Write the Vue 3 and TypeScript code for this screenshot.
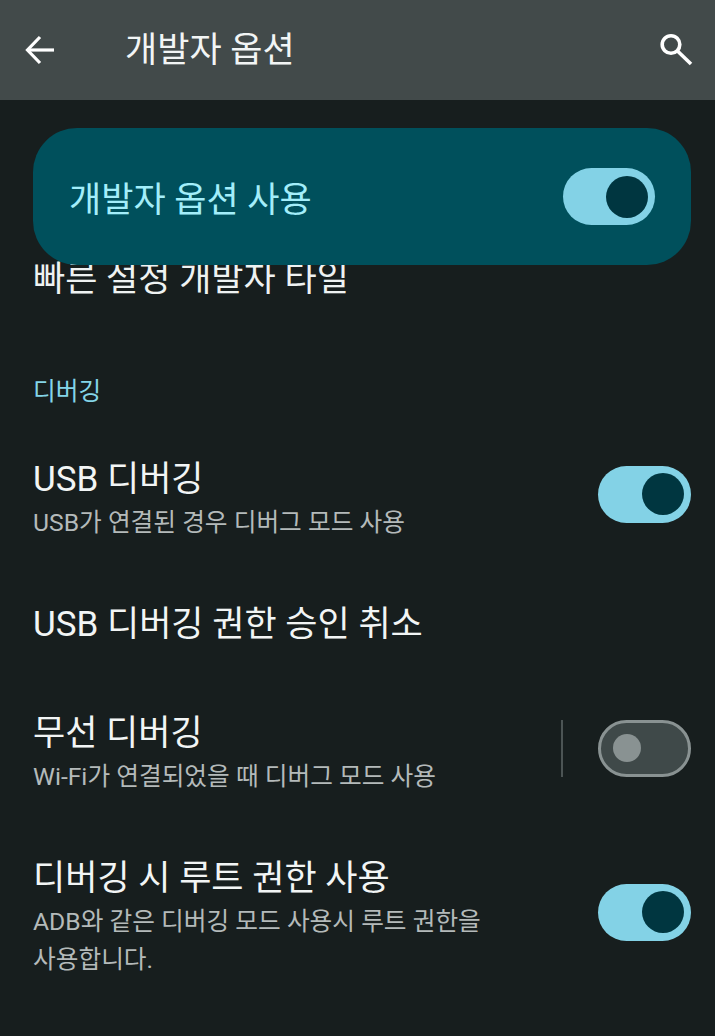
<script setup lang="ts">
interface SettingRow {
  title: string;
  summary?: string;
  toggle?: boolean;
  divider?: boolean;
}

const rows: SettingRow[] = [
  { title: "USB 디버깅", summary: "USB가 연결된 경우 디버그 모드 사용", toggle: true },
  { title: "USB 디버깅 권한 승인 취소" },
  { title: "무선 디버깅", summary: "Wi-Fi가 연결되었을 때 디버그 모드 사용", toggle: false, divider: true },
  { title: "디버깅 시 루트 권한 사용", summary: "ADB와 같은 디버깅 모드 사용시 루트 권한을 사용합니다.", toggle: true },
];
</script>

<template>
  <div class="screen">
    <header class="toolbar">
      <svg class="back" width="32" height="32" viewBox="0 0 32 32" fill="none" stroke="#fff" stroke-width="3.2">
        <path d="M30 16H4" />
        <path d="M16 3L3.500 16 16 29" />
      </svg>
      <h1 class="toolbar-title">개발자 옵션</h1>
      <svg class="search" width="34" height="34" viewBox="0 0 34 34" fill="none" stroke="#fff" stroke-width="3.6">
        <circle cx="12" cy="12.500" r="8.800" />
        <path d="M18.500 19L32 32" />
      </svg>
    </header>

    <main class="content">
      <!-- 스크롤 시 목록 위에 겹쳐 있는 마스터 스위치 -->
      <div class="master">
        <span class="master-label">개발자 옵션 사용</span>
        <span class="switch on"><span class="knob"></span></span>
      </div>

      <div class="peek">빠른 설정 개발자 타일</div>

      <div class="section-title">디버깅</div>

      <div v-for="row in rows" :key="row.title" class="row">
        <div class="row-text">
          <div class="row-title">{{ row.title }}</div>
          <div v-if="row.summary" class="row-summary">{{ row.summary }}</div>
        </div>
        <span v-if="row.divider" class="divider"></span>
        <span v-if="row.toggle !== undefined" class="switch" :class="row.toggle ? 'on' : 'off'">
          <span class="knob"></span>
        </span>
      </div>
    </main>
  </div>
</template>

<style>
html,
body {
  margin: 0;
  background: #171e1e;
}
</style>

<style scoped>
.screen {
  width: 715px;
  height: 1036px;
  overflow: hidden;
  background: #171e1e;
  font-family: Roboto, "Noto Sans CJK KR", sans-serif;
}

.toolbar {
  height: 100px;
  box-sizing: border-box;
  display: flex;
  align-items: center;
  padding: 0 22px 0 24px;
  background: #424a4a;
}

.back {
  flex: none;
}

.toolbar-title {
  flex: 1;
  margin: 0 0 7px 69px;
  font-size: 35px;
  font-weight: 400;
  color: #f2f5f5;
}

.search {
  flex: none;
  margin-bottom: 2px;
}

.content {
  position: relative;
  padding: 0 24px 0 33px;
}

.master {
  position: absolute;
  z-index: 2;
  top: 28px;
  left: 33px;
  right: 24px;
  height: 137px;
  box-sizing: border-box;
  display: flex;
  align-items: center;
  justify-content: space-between;
  padding: 0 36px;
  border-radius: 44px;
  background: #00505c;
}

.master .switch {
  width: 92px;
}

.master-label {
  font-size: 35px;
  color: #a3eefa;
}

.peek {
  padding-top: 157px;
  height: 46px;
  font-size: 35px;
  line-height: 46px;
  color: #eef2f2;
}

.section-title {
  margin: 73px 0 13px;
  height: 32px;
  font-size: 24.7px;
  line-height: 32px;
  color: #84d5e8;
}

.row {
  display: flex;
  align-items: center;
  padding: 27px 0 26px;
}

.row-text {
  flex: 1;
  min-height: 50px;
  max-width: 460px;
  padding-top: 8px;
  margin-bottom: -2px;
  word-break: keep-all;
}

.row-title {
  font-size: 35px;
  line-height: 48px;
  white-space: nowrap;
  color: #f2f5f5;
}

.row-summary {
  font-size: 24.7px;
  line-height: 38px;
  color: #b4baba;
}

.divider {
  width: 2px;
  height: 57px;
  margin: 0 35px 0 auto;
  background: #4c5454;
}

.switch {
  flex: none;
  width: 93px;
  height: 57px;
  margin-left: auto;
  box-sizing: border-box;
  display: flex;
  align-items: center;
  border-radius: 29px;
}

.divider + .switch {
  margin-left: 0;
}

.switch.on {
  justify-content: flex-end;
  padding-right: 7px;
  background: #83d2e6;
}

.switch.on .knob {
  width: 42px;
  height: 42px;
  border-radius: 50%;
  background: #003640;
}

.switch.off {
  padding-left: 12px;
  background: #3f4949;
  border: 3px solid #899292;
}

.switch.off .knob {
  width: 28px;
  height: 28px;
  border-radius: 50%;
  background: #899292;
}
</style>
